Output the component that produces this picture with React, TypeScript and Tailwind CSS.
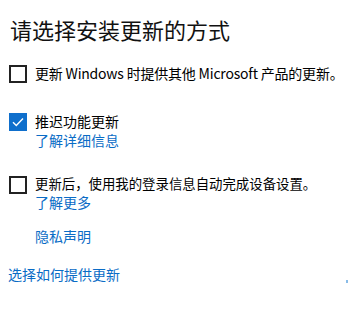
import React from "react";

const font = { fontFamily: '"Noto Sans CJK SC", "Noto Sans", sans-serif' };

function Box({ checked, className = "" }: { checked?: boolean; className?: string }) {
  if (checked) {
    return (
      <div className={`w-[18px] h-[18px] shrink-0 bg-[#0f6fcc] flex items-center justify-center ${className}`}>
        <svg width="14" height="14" viewBox="0 0 14 14" fill="none">
          <path d="M2 7.2 L5.3 10.5 L12 3.5" stroke="white" strokeWidth="1.4" />
        </svg>
      </div>
    );
  }
  return <div className={`w-[18px] h-[18px] shrink-0 border-2 border-[#222] bg-white ${className}`} />;
}

export default function App() {
  return (
    <div className="relative w-[348px] h-[310px] bg-white overflow-hidden text-black" style={font}>
      <div className="pl-[10px] pt-[13px] text-[22px] leading-[32px] text-[#111]">请选择安装更新的方式</div>

      <div className="flex items-start gap-[8px] pl-[9px] mt-[18px] text-[14px] leading-[20px] whitespace-nowrap">
        <Box className="mt-[2px]" />
        <div className="tracking-[-0.2px]">更新 Windows 时提供其他 Microsoft 产品的更新。</div>
      </div>

      <div className="flex items-start gap-[8px] pl-[9px] mt-[29px] text-[14px] leading-[19px]">
        <Box checked className="mt-[1px]" />
        <div>
          <div>推迟功能更新</div>
          <div className="text-[#0a6cc6]">了解详细信息</div>
        </div>
      </div>

      <div className="flex items-start gap-[8px] pl-[9px] mt-[24px] text-[14px] leading-[19px] whitespace-nowrap">
        <Box className="mt-[2px]" />
        <div>
          <div className="text-[13.4px]">更新后，使用我的登录信息自动完成设备设置。</div>
          <div className="text-[#0a6cc6]">了解更多</div>
        </div>
      </div>

      <div className="pl-[35px] mt-[15px] text-[14px] leading-[19px] text-[#0a6cc6]">隐私声明</div>

      <div className="pl-[8px] mt-[19px] text-[14px] leading-[19px] text-[#0a6cc6]">选择如何提供更新</div>

      <div className="absolute left-[346px] top-[280px] w-[2px] h-[3px] bg-[#3a8fd8] opacity-60" />
    </div>
  );
}
